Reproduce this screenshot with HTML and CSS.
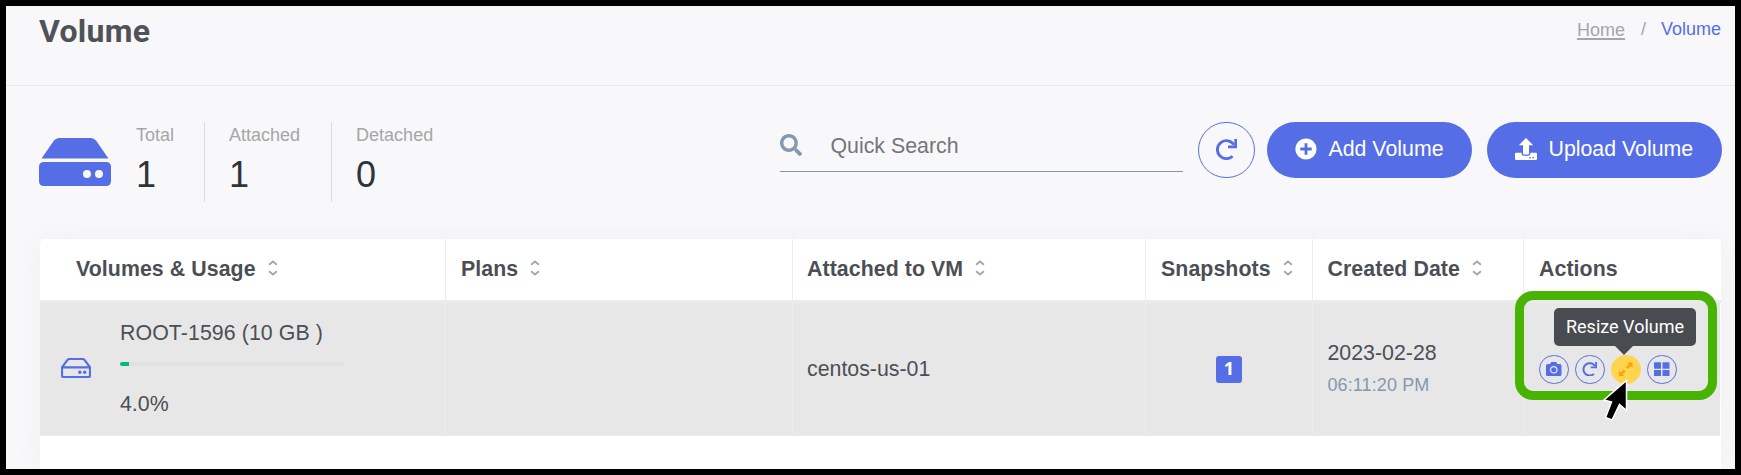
FILE: index.html
```
<!DOCTYPE html>
<html lang="en">
<head>
<meta charset="utf-8">
<title>Volume</title>
<link rel="stylesheet" href="styles.css">
</head>
<body>
<svg class="defs" aria-hidden="true">
  <symbol id="i-sort" viewBox="0 0 10 16"><path d="M1.100 4.800 5 1.600 8.900 4.800M1.100 11.200 5 14.400 8.900 11.200" fill="none" stroke="currentColor" stroke-width="1.900"/></symbol>
  <symbol id="i-redo" viewBox="0 0 21 21"><path d="M16.600 17.200A9 9 0 1 1 18 5.800" fill="none" stroke="currentColor" stroke-width="2.900"/><path d="M18.300 0H21V9.200H12V6.600H18.300Z" fill="currentColor"/></symbol>
</svg>
<div class="screen">
  <header class="page-head">
    <h1 class="page-title">Volume</h1>
    <nav class="crumbs"><a class="crumb-home">Home</a><span class="crumb-sep">/</span><span class="crumb-here">Volume</span></nav>
  </header>
  <section class="toolbar">
    <svg class="hdd" viewBox="0 0 72 48"><path fill="currentColor" fill-rule="evenodd" d="M2.500 20.500 15 2.500Q17 0 20 0H52Q55 0 57 2.500L69.500 20.500ZM5 24H67Q72 24 72 29V43Q72 48 67 48H5Q0 48 0 43V29Q0 24 5 24ZM44 36a4 4 0 1 0 8 0a4 4 0 1 0-8 0ZM56 36a4 4 0 1 0 8 0a4 4 0 1 0-8 0Z"/></svg>
    <dl class="stats">
      <div class="stat"><dt>Total</dt><dd>1</dd></div>
      <div class="stat"><dt>Attached</dt><dd>1</dd></div>
      <div class="stat"><dt>Detached</dt><dd>0</dd></div>
    </dl>
    <label class="search">
      <svg class="search-icon" viewBox="0 0 512 512"><path fill="currentColor" d="M505 442.700 405.300 343c-4.500-4.500-10.600-7-17-7H372c27.600-35.300 44-79.700 44-128C416 93.100 322.900 0 208 0S0 93.100 0 208s93.100 208 208 208c48.300 0 92.700-16.400 128-44v16.300c0 6.400 2.500 12.500 7 17l99.700 99.700c9.400 9.400 24.600 9.400 33.900 0l28.300-28.300c9.400-9.400 9.400-24.600.1-34zM208 336c-70.700 0-128-57.200-128-128 0-70.700 57.200-128 128-128 70.700 0 128 57.200 128 128 0 70.700-57.200 128-128 128z"/></svg>
      <span>Quick Search</span>
    </label>
    <button class="btn-refresh"><svg><use href="#i-redo"/></svg></button>
    <button class="btn btn-add"><svg viewBox="0 0 22 22"><circle cx="11" cy="11" r="10.600" fill="currentColor"/><path d="M11 5.300V16.700M5.300 11H16.700" stroke="#556ee6" stroke-width="2.800"/></svg>Add Volume</button>
    <button class="btn btn-upload"><svg viewBox="0 0 22 22"><path fill="currentColor" fill-rule="evenodd" d="M11 0 18.200 7.200H14V15.500Q14 16.400 13 16.400H9Q8 16.400 8 15.500V7.200H3.800ZM1 14.800H6.600V16Q6.800 17.800 8.600 17.800H13.400Q15.200 17.800 15.400 16V14.800H21Q22 14.800 22 15.800V21Q22 22 21 22H1Q0 22 0 21V15.800Q0 14.800 1 14.800ZM14.200 19V20.200H15.800V19ZM17.400 19V20.200H19V19Z"/></svg>Upload Volume</button>
  </section>
  <main class="card">
    <div class="row head">
      <div class="cell c-name">Volumes &amp; Usage<svg class="sort"><use href="#i-sort"/></svg></div>
      <div class="cell">Plans<svg class="sort"><use href="#i-sort"/></svg></div>
      <div class="cell">Attached to VM<svg class="sort"><use href="#i-sort"/></svg></div>
      <div class="cell">Snapshots<svg class="sort"><use href="#i-sort"/></svg></div>
      <div class="cell">Created Date<svg class="sort"><use href="#i-sort"/></svg></div>
      <div class="cell">Actions</div>
    </div>
    <div class="row item">
      <div class="cell c-vol">
        <svg class="disk" viewBox="0 0 30 20"><path d="M1 9.300 6.300 2.200Q7.200 1 8.600 1H21.400Q22.800 1 23.700 2.200L29 9.300V17.500Q29 19 27.500 19H2.500Q1 19 1 17.500ZM1.500 9.300H28.500" fill="none" stroke="currentColor" stroke-width="2.200"/><circle cx="18.800" cy="14.200" r="1.700" fill="currentColor"/><circle cx="23.700" cy="14.200" r="1.700" fill="currentColor"/></svg>
        <div class="usage"><div class="vol-name">ROOT-1596 (10 GB )</div><div class="bar"><div class="fill" style="width:4%"></div></div><div>4.0%</div></div>
      </div>
      <div class="cell"></div>
      <div class="cell">centos-us-01</div>
      <div class="cell c-snap"><span class="badge">1</span></div>
      <div class="cell c-date"><span>2023-02-28</span><span class="time">06:11:20 PM</span></div>
      <div class="cell c-actions">
        <button class="act"><svg viewBox="0 0 15 14"><path fill="currentColor" d="M1.500 2H4L5 0H10L11 2H13.500Q15 2 15 3.500V12Q15 13.500 13.500 13.500H1.500Q0 13.500 0 12V3.500Q0 2 1.500 2Z"/><circle cx="7.500" cy="7.500" r="3.100" fill="none" stroke="#e7e7e7" stroke-width="1.200"/></svg></button>
        <button class="act"><svg><use href="#i-redo"/></svg></button>
        <button class="act act-on"><svg viewBox="0 0 14 14"><path fill="currentColor" d="M8.500.500H13.500V5.500L11.900 3.900 9 6.800 7.200 5 10.100 2.100ZM5.500 13.500H.500V8.500L2.100 10.100 5 7.200 6.800 9 3.900 11.900Z"/></svg></button>
        <button class="act"><svg viewBox="0 0 15.500 14"><path fill="currentColor" d="M0 0H7V6.500H0ZM8.500 0H15.500V6.500H8.500ZM0 7.700H7V14H0ZM8.500 7.700H15.500V14H8.500Z"/></svg></button>
      </div>
    </div>
  </main>
  <div class="highlight"></div>
  <div class="tooltip">Resize Volume</div>
  <svg class="cursor" viewBox="0 0 28 46"><path d="M24.500 3.500V33.500L17.500 27.500 10 43 3.500 40.500 9.500 25 2 23Z" fill="#000" stroke="#fff" stroke-width="1.500"/></svg>
</div>
</body>
</html>
```
FILE: styles.css
```
* { box-sizing: border-box; }
body { margin: 0; font-family: "Liberation Sans", Arial, sans-serif; font-size: 21.33px; color: #4b4f55; }
button { font: inherit; margin: 0; padding: 0; }
.defs { display: none; }
.screen { position: relative; width: 1741px; height: 475px; border: 6px solid #000; background: #f8f8fb; overflow: hidden; display: flex; flex-direction: column; }
.page-head { flex: none; height: 80px; border-bottom: 1px solid #e9e9ec; display: flex; justify-content: space-between; align-items: flex-start; padding: 7px 14px 0 33px; }
.page-title { margin: 0; font: 700 32px/37px Roboto, sans-serif; letter-spacing: .300px; color: #4f5358; }
.crumbs { display: flex; font-size: 18px; line-height: 20px; padding-top: 6px; color: #a6a6a6; }
.crumb-home { text-decoration: underline; text-decoration-thickness: 2px; text-underline-offset: 2px; padding-top: 1px; }
.crumb-sep { padding: 0 15px 0 16px; }
.crumb-here { color: #556ee6; }
.toolbar { flex: none; height: 147px; display: flex; align-items: flex-start; padding: 36px 13px 0 33px; }
.hdd { width: 72px; height: 48px; margin-top: 16px; color: #556ee6; flex: none; }
.stats { margin: 0; display: flex; }
.stat { height: 80px; padding: 0 31px 0 24px; border-left: 1px solid #dcdcdf; }
.stat:first-child { border-left: 0; padding-left: 25px; padding-right: 30px; }
.stat dt { font-size: 18px; line-height: 20px; padding-top: 3px; color: #a6a6a6; }
.stat dd { margin: 10px 0 0; font-size: 36px; line-height: 40px; color: #2f343b; }
.search { margin-left: auto; width: 403px; height: 50px; border-bottom: 1px solid #8297af; display: flex; align-items: flex-start; color: #757575; line-height: 24px; padding-top: 12px; }
.search-icon { width: 22px; height: 22px; margin-right: 28.500px; color: #8698ae; }
.btn-refresh { width: 57px; height: 56px; margin-left: 15px; border: 1px solid #556ee6; border-radius: 28px; background: none; color: #556ee6; display: flex; align-items: center; justify-content: center; padding-bottom: 2px; }
.btn-refresh svg { width: 21px; height: 21px; }
.btn { height: 56px; border: 0; border-radius: 28px; background: #556ee6; color: #fff; display: flex; align-items: center; padding: 0 0 2px 27.500px; gap: 12px; white-space: nowrap; }
.btn svg { width: 22px; height: 22px; }
.btn-add { width: 205px; margin-left: 12px; }
.btn-upload { width: 235px; margin-left: 15px; }
.card { flex: 1; margin: 6px 14px 0 34px; background: #fff; border-radius: 5px 5px 0 0; box-shadow: 0 0 32px rgba(18, 38, 63, .04); }
.row { display: grid; grid-template-columns: 405px 347px 353px 167px 211px 198px; }
.cell { border-left: 1px solid #ededed; padding-left: 15px; display: flex; align-items: center; }
.cell:first-child { border-left: 0; }
.cell:nth-child(3) { padding-left: 14px; }
.row .cell:nth-child(5) { padding-left: 14.500px; }
.head { height: 64px; border-bottom: 3px solid #ebebeb; font-weight: 700; letter-spacing: .070px; }
.head .cell { padding-bottom: 1px; }
.head .c-name { padding-left: 36px; }
.sort { width: 10px; height: 16px; margin: 0 0 2px 12px; color: #a6a6a6; }
.item { height: 133px; background: #e7e7e7; border-bottom: 1px solid #ebebeb; margin-right: 1px; }
.c-vol { padding: 0 0 2px 21px; }
.disk { width: 30px; height: 20px; color: #556ee6; flex: none; }
.usage { margin-left: 29px; line-height: 24px; }
.vol-name { letter-spacing: .080px; }
.bar { width: 225px; height: 4px; margin: 17px 0 26px; background: #e1e1e1; border-radius: 2px; overflow: hidden; }
.fill { height: 4px; background: #02bb7a; }
.item .c-snap { justify-content: center; padding: 0; }
.badge { width: 26px; height: 27px; border-radius: 3px; background: #556ee6; color: #fff; font: 700 18px/25px "Open Sans", sans-serif; text-align: center; }
.c-date { flex-direction: column; align-items: flex-start; justify-content: center; line-height: 32px; }
.c-date .time { font-size: 18px; letter-spacing: .100px; color: #8698ae; }
.c-actions { gap: 6px; }
.act { width: 30px; height: 29px; border: 1px solid #556ee6; border-radius: 15px; background: none; color: #556ee6; display: flex; align-items: center; justify-content: center; }
.act svg { width: 15.500px; height: 14.500px; }
.act-on { background: #ffd54f; border-color: #ffd54f; color: #ff9f0a; }
.highlight { position: absolute; left: 1509px; top: 285px; width: 202px; height: 109px; border: 9px solid #48b302; border-radius: 18px; }
.tooltip { position: absolute; left: 1548px; top: 302px; width: 142px; height: 38px; border-radius: 5px; background: #484b50; color: #fff; font: 18px/38px Roboto, sans-serif; text-align: center; }
.tooltip::after { content: ""; position: absolute; left: 61px; top: 38px; border: 9px solid transparent; border-top-color: #484b50; border-bottom: 0; }
.cursor { position: absolute; left: 1596px; top: 371px; width: 28px; height: 46px; }
```
